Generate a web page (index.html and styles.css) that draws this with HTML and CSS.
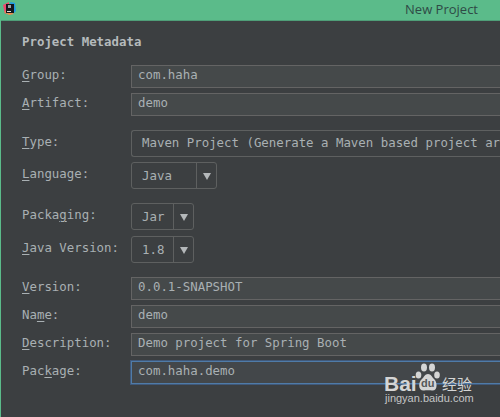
FILE: index.html
```html
<!DOCTYPE html>
<html lang="en">
<head>
  <meta charset="UTF-8" />
  <title>New Project</title>
  <link rel="stylesheet" href="styles.css">
</head>
<body>
  <div class="titlebar">
    <svg class="app-icon" width="13" height="13" viewBox="0 0 13 13">
      <path d="M0 3 L6 0 L6 9 L2 12 Z" fill="#f0466e"/>
      <path d="M7 0 L12 1 L13 9 L10 12 Z" fill="#1e9be6"/>
      <path d="M1 10 L6 13 L11 12 L5 8 Z" fill="#f08a4b"/>
      <rect x="3" y="2" width="8" height="9" fill="#14181c"/>
      <rect x="5" y="3" width="3" height="3" fill="#9aa0a4"/>
      <rect x="4" y="9" width="4" height="1" fill="#ddd"/>
    </svg>
    <span class="title">New Project</span>
  </div>

  <div class="content">
    <h1>Project Metadata</h1>

    <div class="row r-group">
      <label><u>G</u>roup:</label>
      <div class="field">com.haha</div>
    </div>
    <div class="row r-artifact">
      <label><u>A</u>rtifact:</label>
      <div class="field">demo</div>
    </div>

    <div class="row r-type">
      <label><u>T</u>ype:</label>
      <div class="combo-wide">Maven Project (Generate a Maven based project ar</div>
    </div>
    <div class="row r-language">
      <label><u>L</u>anguage:</label>
      <div class="combo lang"><span class="val">Java</span><span class="arrow"></span></div>
    </div>

    <div class="row r-packaging">
      <label>Packa<u>g</u>ing:</label>
      <div class="combo"><span class="val">Jar</span><span class="arrow"></span></div>
    </div>
    <div class="row r-java">
      <label><u>J</u>ava Version:</label>
      <div class="combo"><span class="val">1.8</span><span class="arrow"></span></div>
    </div>

    <div class="row r-version">
      <label><u>V</u>ersion:</label>
      <div class="field">0.0.1-SNAPSHOT</div>
    </div>
    <div class="row r-name">
      <label>Na<u>m</u>e:</label>
      <div class="field">demo</div>
    </div>
    <div class="row r-desc">
      <label><u>D</u>escription:</label>
      <div class="field">Demo project for Spring Boot</div>
    </div>
    <div class="row r-package">
      <label>Pac<u>k</u>age:</label>
      <div class="field focused">com.haha.demo</div>
    </div>
  </div>

  <div class="watermark">
    <div class="wm-top">
      <span class="wm-bai">Bai</span>
      <div class="wm-logo">
        <svg width="25" height="30" viewBox="0 0 25 30">
          <ellipse cx="3.5" cy="13" rx="2.8" ry="3.6" fill="#d4d5d5"/>
          <ellipse cx="9" cy="5.5" rx="3" ry="4" fill="#d4d5d5"/>
          <ellipse cx="17" cy="5.5" rx="3" ry="4" fill="#d4d5d5"/>
          <ellipse cx="22" cy="13" rx="2.8" ry="3.6" fill="#d4d5d5"/>
          <path d="M13 12 C10 12 9 15 7 17 C3 20 3 29 9 28.500 C11 28.300 15 28.300 17 28.500 C23 29 22.500 20 19 17 C17 15 16 12 13 12 Z" fill="#d4d5d5"/>
        </svg>
        <span class="wm-du">du</span>
      </div>
      <span class="wm-cn">经验</span>
    </div>
    <div class="wm-url">jingyan.baidu.com</div>
  </div>
</body>
</html>
```

FILE: styles.css
```css
html, body {
  margin: 0;
  height: 100%;
  overflow: hidden;
}
body {
  width: 500px;
  height: 417px;
  position: relative;
  box-sizing: border-box;
  background-color: #3c3f41;
  border-left: 1px solid #5bbb8a;
  font-family: "DejaVu Sans Mono", monospace;
  font-size: 12.4px;
  color: #a9b0b3;
}
.titlebar {
  height: 20px;
  margin-left: -1px;
  background-color: #5bbb8a;
  border-bottom: 1px solid #4f9e78;
  display: flex;
  align-items: center;
  justify-content: space-between;
  padding: 0 22px 0 3px;
}
.app-icon {
  margin-top: -3px;
}
.title {
  font-family: "Open Sans", sans-serif;
  font-size: 13px;
  color: #2f4a46;
  margin-top: -3px;
}
.content {
  padding: 12px 0 0 20px;
}
h1 {
  margin: 0 0 14px 1px;
  height: 18px;
  line-height: 18px;
  font-size: 12.4px;
  font-weight: bold;
  color: #b5babc;
}
.row {
  display: flex;
  align-items: center;
}
label {
  width: 110px;
  flex: none;
  box-sizing: border-box;
  padding: 0 0 4px 1px;
}
u {
  text-underline-offset: 2px;
}
.field {
  box-sizing: border-box;
  flex: 1;
  height: 23px;
  line-height: 18px;
  padding-left: 6px;
  background-color: #45494a;
  border: 1px solid #646464;
  border-right: none;
  white-space: nowrap;
}
.focused {
  border-color: #4f7ba8;
  box-shadow: 0 0 0 1px #40597a;
  background-color: #43474a;
}
.combo-wide {
  box-sizing: border-box;
  flex: 1;
  height: 27px;
  line-height: 24px;
  padding-left: 10px;
  border: 1px solid #5e6060;
  border-right: none;
  border-radius: 3px 0 0 3px;
  white-space: nowrap;
}
.combo {
  box-sizing: border-box;
  display: flex;
  width: 63px;
  height: 27px;
  border: 1px solid #5e6060;
  border-radius: 3px;
}
.combo.lang {
  width: 86px;
}
.val {
  flex: 1;
  line-height: 25px;
  padding-left: 10px;
}
.arrow {
  width: 19px;
  flex: none;
  border-left: 1px solid #5e6060;
  position: relative;
}
.arrow::after {
  content: "";
  position: absolute;
  left: 6px;
  top: 10px;
  border-left: 4px solid transparent;
  border-right: 4px solid transparent;
  border-top: 7px solid #b4b8ba;
}
.r-artifact { margin-top: 5px; }
.r-type { margin-top: 14px; }
.r-language { margin-top: 5px; }
.r-packaging { margin-top: 14px; }
.r-java { margin-top: 6px; }
.r-version { margin-top: 14px; }
.r-name { margin-top: 5px; }
.r-desc { margin-top: 5px; }
.r-package { margin-top: 5px; }

/* baidu watermark, sits over the form */
.watermark {
  position: absolute;
  left: 383px;
  top: 362px;
  color: #d4d5d5;
  font-family: "Liberation Sans", sans-serif;
}
.wm-top {
  display: flex;
  align-items: flex-end;
  height: 30px;
}
.wm-bai {
  font-size: 21px;
  font-weight: bold;
  line-height: 16px;
  width: 31px;
}
.wm-logo {
  position: relative;
  width: 25px;
  height: 30px;
}
.wm-logo svg {
  display: block;
}
.wm-du {
  position: absolute;
  left: 6px;
  top: 14px;
  font-size: 11px;
  font-weight: bold;
  line-height: 14px;
  color: #555859;
}
.wm-cn {
  font-family: "Noto Sans CJK SC", sans-serif;
  font-size: 15px;
  line-height: 16px;
  margin-left: 2px;
}
.wm-url {
  font-size: 11px;
  line-height: 12px;
  margin-left: 1px;
  color: #c4c5c5;
}
```
